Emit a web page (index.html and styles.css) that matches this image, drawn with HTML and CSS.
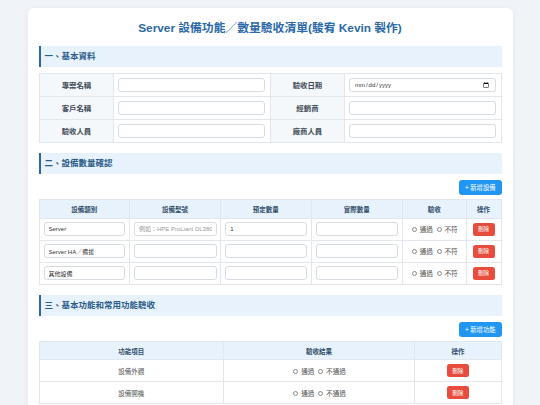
FILE: index.html
```html
<!DOCTYPE html>
<html lang="zh-Hant">
<head>
  <meta charset="UTF-8" />
  <meta name="viewport" content="width=device-width, initial-scale=1.0"/>
  <title>Server 設備驗收清單</title>
  <link rel="stylesheet" href="styles.css">
</head>
<body>
  <div class="container">
    <h1>Server 設備功能／數量驗收清單(駿宥 Kevin 製作)</h1>

    <div class="section">
      <h2>一、基本資料</h2>
      <table class="info">
        <tr>
          <td class="label">專案名稱</td>
          <td><input type="text" /></td>
          <td class="label">驗收日期</td>
          <td><input type="date" /></td>
        </tr>
        <tr>
          <td class="label">客戶名稱</td>
          <td><input type="text" /></td>
          <td class="label">經銷商</td>
          <td><input type="text" /></td>
        </tr>
        <tr>
          <td class="label">驗收人員</td>
          <td><input type="text" /></td>
          <td class="label">廠商人員</td>
          <td><input type="text" /></td>
        </tr>
      </table>
    </div>

    <div class="section">
      <h2>二、設備數量確認</h2>
      <div class="toolbar">
        <button class="btn add">+ 新增設備</button>
      </div>
      <table class="grid qty">
        <thead>
          <tr>
            <th>設備類別</th>
            <th>設備型號</th>
            <th>預定數量</th>
            <th>實際數量</th>
            <th>驗收</th>
            <th>操作</th>
          </tr>
        </thead>
        <tbody>
          <tr>
            <td><input type="text" value="Server" /></td>
            <td><input type="text" placeholder="例如：HPE ProLiant DL380" /></td>
            <td><input type="text" value="1" /></td>
            <td><input type="text" /></td>
            <td class="check">
              <label><input type="radio" name="q1" /> 通過</label>
              <label><input type="radio" name="q1" /> 不符</label>
            </td>
            <td class="center"><button class="btn del">刪除</button></td>
          </tr>
          <tr>
            <td><input type="text" value="Server HA／備援" /></td>
            <td><input type="text" /></td>
            <td><input type="text" /></td>
            <td><input type="text" /></td>
            <td class="check">
              <label><input type="radio" name="q2" /> 通過</label>
              <label><input type="radio" name="q2" /> 不符</label>
            </td>
            <td class="center"><button class="btn del">刪除</button></td>
          </tr>
          <tr>
            <td><input type="text" value="其他設備" /></td>
            <td><input type="text" /></td>
            <td><input type="text" /></td>
            <td><input type="text" /></td>
            <td class="check">
              <label><input type="radio" name="q3" /> 通過</label>
              <label><input type="radio" name="q3" /> 不符</label>
            </td>
            <td class="center"><button class="btn del">刪除</button></td>
          </tr>
        </tbody>
      </table>
    </div>

    <div class="section">
      <h2>三、基本功能和常用功能驗收</h2>
      <div class="toolbar">
        <button class="btn add">+ 新增功能</button>
      </div>
      <table class="grid func">
        <thead>
          <tr>
            <th>功能項目</th>
            <th>驗收結果</th>
            <th>操作</th>
          </tr>
        </thead>
        <tbody>
          <tr>
            <td class="center">設備外觀</td>
            <td class="check">
              <label><input type="radio" name="f1" /> 通過</label>
              <label><input type="radio" name="f1" /> 不通過</label>
            </td>
            <td class="center"><button class="btn del">刪除</button></td>
          </tr>
          <tr>
            <td class="center">設備開機</td>
            <td class="check">
              <label><input type="radio" name="f2" /> 通過</label>
              <label><input type="radio" name="f2" /> 不通過</label>
            </td>
            <td class="center"><button class="btn del">刪除</button></td>
          </tr>
        </tbody>
      </table>
    </div>
  </div>
</body>
</html>
```

FILE: styles.css
```css
body {
  font-family: "Liberation Sans", "Noto Sans CJK TC", sans-serif;
  background-color: #f0f4f8;
  margin: 0;
  padding: 8px 0;
  color: #333;
}

.container {
  width: 463px;
  margin: 0 auto;
  padding: 11px;
  background: #ffffff;
  border-radius: 6px;
  box-shadow: 0 1px 6px rgba(0,0,0,0.06);
}

h1 {
  text-align: center;
  font-size: 11.8px;
  line-height: 14px;
  color: #2b6aa6;
  margin: 2px 0 11px;
}

.section {
  margin-bottom: 10.6px;
}

h2 {
  font-size: 8.5px;
  line-height: 20.5px;
  color: #2c5d8a;
  background-color: #e8f2fc;
  border-left: 2px solid #2a66a0;
  padding-left: 4px;
  margin: 0 0 6.3px;
}

table {
  width: 100%;
  border-collapse: collapse;
  table-layout: fixed;
}

td, th {
  border: 1px solid #e1e7ec;
}

input[type="text"],
input[type="date"] {
  display: block;
  width: 100%;
  box-sizing: border-box;
  height: 14px;
  padding: 0 4px;
  border: 1px solid #d6dce2;
  border-radius: 3px;
  font-family: inherit;
  font-size: 6px;
  color: #333;
  background: #fff;
}

input::placeholder {
  color: #999;
}

.info td {
  height: 22px;
  padding: 0 4.5px 0 3.5px;
}

.info .label {
  width: 16%;
  background-color: #f5f8fb;
  text-align: center;
  font-weight: bold;
  font-size: 7.4px;
  color: #3f4b57;
  padding: 0;
}

.toolbar {
  text-align: right;
  margin-bottom: 4px;
  line-height: 0;
}

.btn {
  font-family: inherit;
  border: none;
  color: white;
  cursor: pointer;
}

.add {
  height: 15px;
  padding: 0 6px;
  font-size: 6.3px;
  background-color: #2196f3;
  border-radius: 3px;
}

.del {
  height: 13px;
  width: 22px;
  padding: 0;
  font-size: 5.6px;
  background-color: #e74c3c;
  border-radius: 2.5px;
}

.grid th {
  height: 17.4px;
  padding: 0;
  background-color: #e8f2fc;
  color: #2f4d69;
  font-size: 6.5px;
  text-align: center;
}

.grid td {
  height: 21px;
  padding: 0 3.6px 0 4px;
  font-size: 6.5px;
  color: #555;
}

.qty th:nth-child(1), .qty th:nth-child(3) { width: 19.6%; }
.qty th:nth-child(2), .qty th:nth-child(4) { width: 19.8%; }
.qty th:nth-child(5) { width: 13.8%; }
.qty th:nth-child(6) { width: 7.4%; }

.func th:nth-child(1) { width: 39.7%; }
.func th:nth-child(2) { width: 41.2%; }

.grid td.center {
  text-align: center;
  padding: 0;
}

.grid td.check {
  text-align: center;
  padding: 0;
  font-size: 6.6px;
  color: #555;
  white-space: nowrap;
}

.check label {
  margin: 0 0.5px;
}

input[type="radio"] {
  appearance: none;
  width: 5px;
  height: 5px;
  margin: 0 1px;
  border: 0.7px solid #8a8a8a;
  border-radius: 50%;
  vertical-align: -0.3px;
}
```
